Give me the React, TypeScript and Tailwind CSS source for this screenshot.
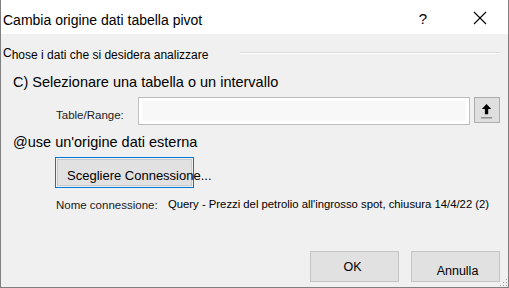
import React from 'react'

const font = "font-['Liberation_Sans',Arial,sans-serif]"

function UpArrow() {
  return (
    <svg width="26" height="26" viewBox="0 0 26 26">
      <polygon points="12.5,6.5 17.5,12 14.3,12 14.3,17.5 10.7,17.5 10.7,12 7.5,12" fill="#000" />
      <line x1="6.5" y1="21.5" x2="18.5" y2="21.5" stroke="#5a5a5a" strokeWidth="1" />
    </svg>
  )
}

function CloseX() {
  return (
    <svg width="14" height="14" viewBox="0 0 14 14">
      <path d="M1 1 L13 13 M13 1 L1 13" stroke="#000" strokeWidth="1.1" fill="none" />
    </svg>
  )
}

function Grip() {
  return (
    <svg width="10" height="10" viewBox="0 0 10 10">
      <rect x="8" y="2" width="1" height="1" fill="#a0a0a0" />
      <rect x="5" y="5" width="1" height="1" fill="#a0a0a0" />
      <rect x="8" y="5" width="1" height="1" fill="#a0a0a0" />
      <rect x="2" y="8" width="1" height="1" fill="#a0a0a0" />
      <rect x="5" y="8" width="1" height="1" fill="#a0a0a0" />
      <rect x="8" y="8" width="1" height="1" fill="#a0a0a0" />
    </svg>
  )
}

export default function App() {
  return (
    <div className={`w-[509px] h-[288px] flex flex-col border-x border-b border-[#7f7f7f] bg-[#f0f0f0] text-black ${font}`}>
      {/* title bar */}
      <div className="h-[34px] bg-white flex items-start shrink-0">
        <div className="pl-[2px] pt-[10px] leading-[20px] text-[14px]">Cambia origine dati tabella pivot</div>
        <div className="ml-auto w-[14px] pt-[9px] leading-[20px] text-[15px] text-center">?</div>
        <div className="ml-[43px] mr-[21px] pt-[11px]">
          <CloseX />
        </div>
      </div>

      {/* body */}
      <div className="flex-1 flex flex-col relative">
        <div className="mt-[14px] h-[14px] flex items-start">
          <div className="ml-[2px] text-[12px] leading-[14px] whitespace-nowrap">
            <span className="inline-block -translate-y-[2px]">C</span>hose i dati che si desidera analizzare
          </div>
          <div className="ml-[32px] mr-[8px] mt-[4px] flex-1 border-t border-[#dadada] border-b border-b-white" />
        </div>

        <div className="mt-[11px] ml-[12px] text-[14.5px] leading-[18px]">C) Selezionare una tabella o un intervallo</div>

        <div className="mt-[6px] h-[28px] flex items-start">
          <div className="ml-[55px] w-[82px] pt-[11px] text-[11.5px] leading-[14px] text-[#1a1a1a]">Table/Range:</div>
          <div className="w-[332px] h-[28px] border border-[#bdbdbd] bg-white p-[3px]">
            <div className="h-full bg-[#f8f8f8]" />
          </div>
          <div className="ml-[4px] w-[26px] h-[26px] border border-[#adadad] bg-[#dfdfdf] flex items-center justify-center">
            <UpArrow />
          </div>
        </div>

        <div className="mt-[8px] ml-[12px] text-[14.5px] leading-[18px]">@use un'origine dati esterna</div>

        <div className="mt-[6px] ml-[54px] w-[139px] h-[31px] border border-[#0078d7] p-px">
          <div className="h-full border border-[#c9c9c9] bg-[#e1e1e1] flex items-center pl-[9px] pt-[6px] text-[13px] leading-[16px] whitespace-nowrap overflow-visible">
            Scegliere Connessione...
          </div>
        </div>

        <div className="mt-[10px] flex items-start">
          <div className="ml-[55px] w-[112px] text-[11.5px] leading-[14px] text-[#1a1a1a]">Nome connessione:</div>
          <div className="-mt-px text-[11.3px] leading-[14px] whitespace-nowrap">
            Query - Prezzi del petrolio all'ingrosso spot, chiusura 14/4/22 (2)
          </div>
        </div>

        <div className="mt-auto flex justify-end gap-[12px] pr-[8px] pb-[5px]">
          <button className="w-[89px] h-[31px] border border-[#c4c4c4] bg-[#e1e1e1] flex items-center justify-center text-[12.5px] leading-[16px] pr-[4px]">
            OK
          </button>
          <button className="w-[89px] h-[31px] border border-[#c4c4c4] bg-[#e1e1e1] flex items-center justify-center text-[12.5px] leading-[16px] pt-[8px] pl-[4px]">
            Annulla
          </button>
        </div>

        <div className="absolute right-0 bottom-0">
          <Grip />
        </div>
      </div>
    </div>
  )
}
